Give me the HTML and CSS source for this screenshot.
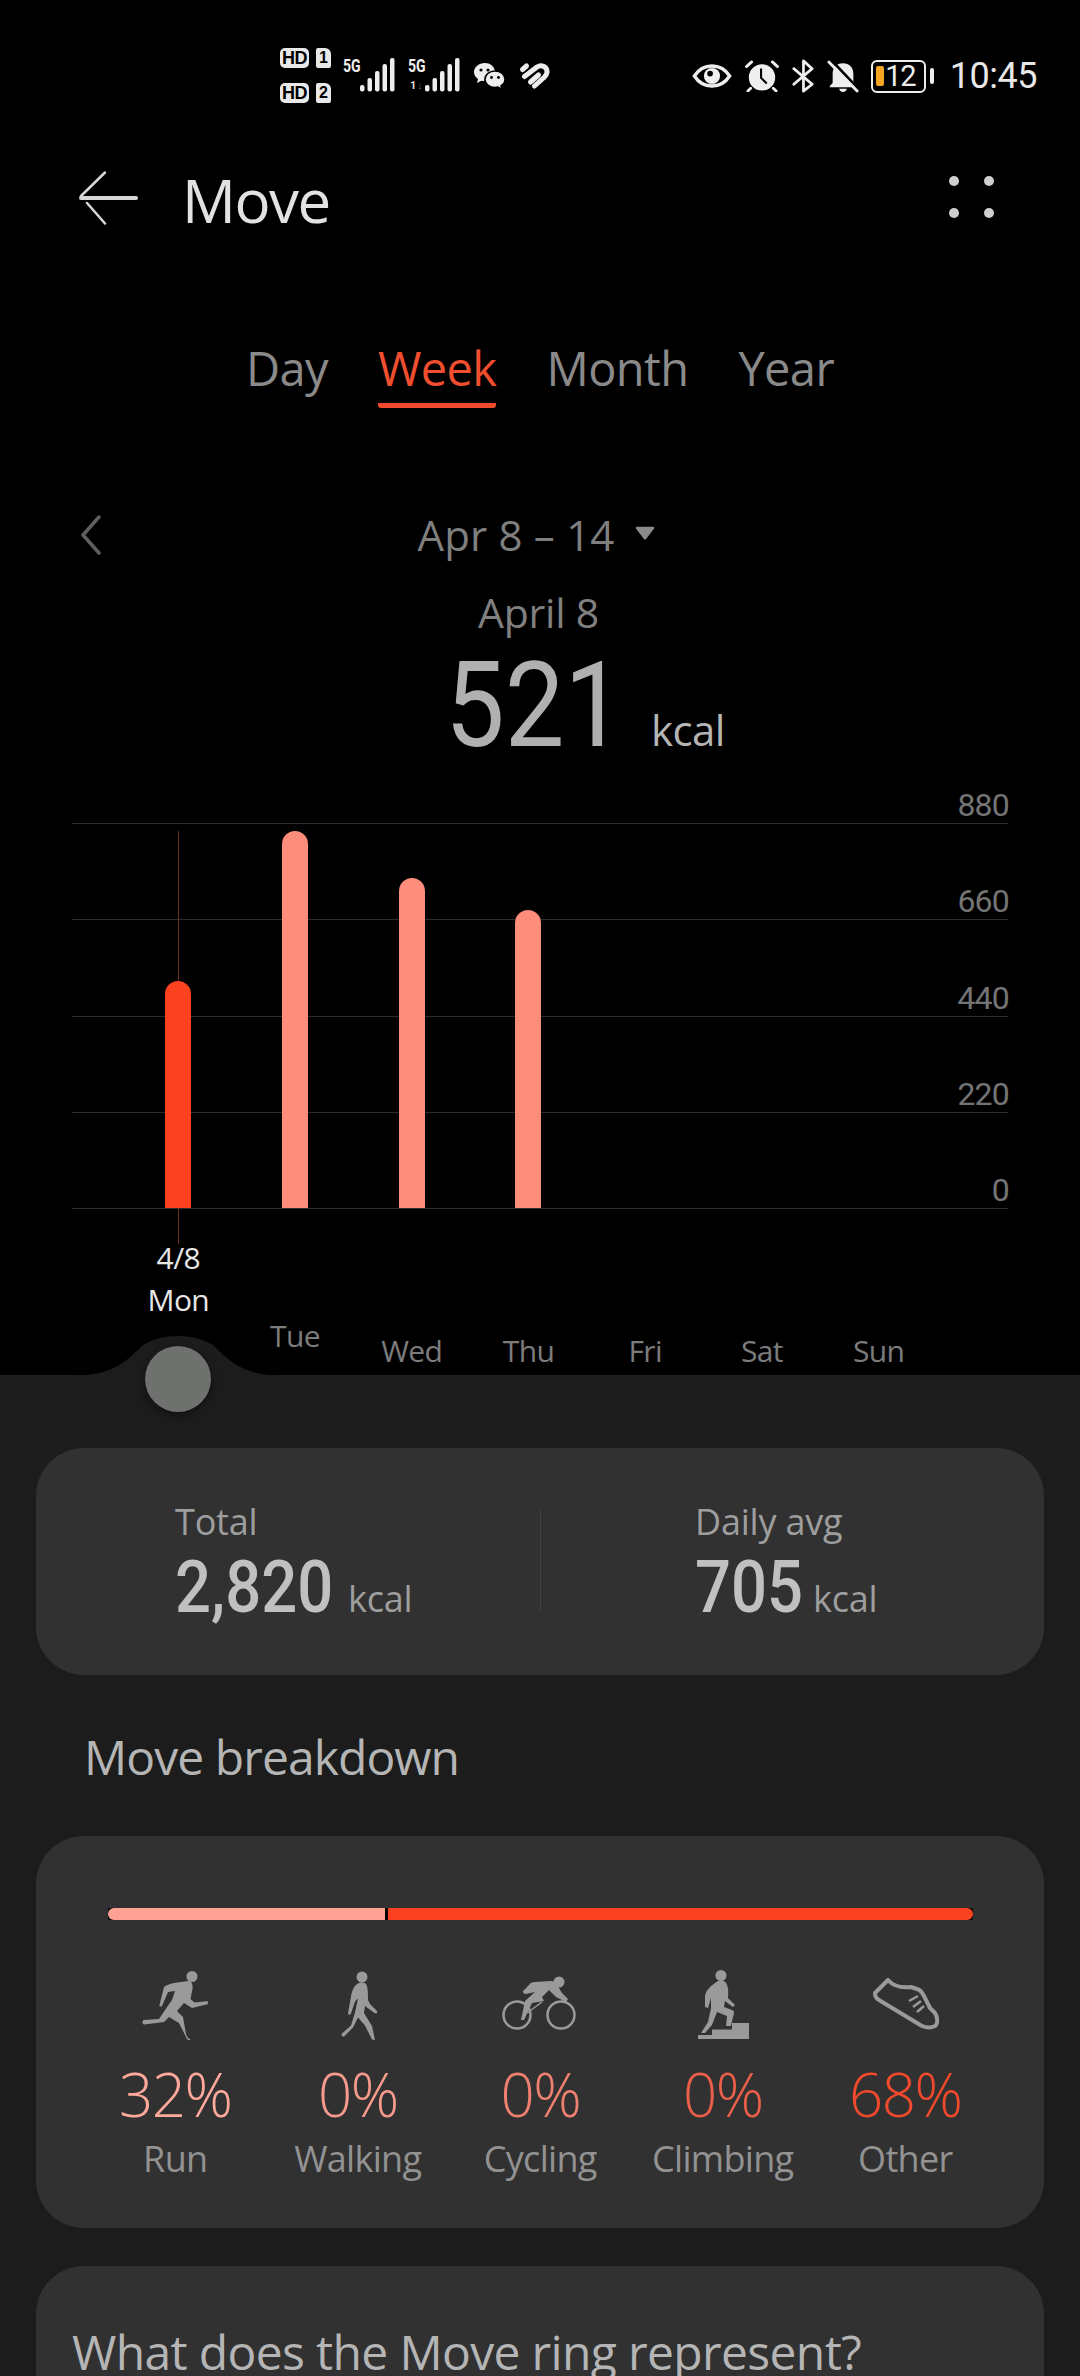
FILE: index.html
```html
<!DOCTYPE html>
<html lang="en">
<head>
<meta charset="utf-8">
<title>Move</title>
<link rel="stylesheet" href="styles.css">
</head>
<body>
<div class="page">
  <section class="top">
    <div class="status">
      <div class="status-left">
        <div class="hd-stack">
          <div class="hd-row"><span class="hd">HD</span><span class="sim">1</span></div>
          <div class="hd-row"><span class="hd">HD</span><span class="sim">2</span></div>
        </div>
        <div class="net"><span class="g5">5G</span>
          <svg class="bars" viewBox="0 0 36 34"><g fill="#eee"><rect x="0" y="27" width="4.500" height="6.500" rx="2"/><rect x="7.500" y="20" width="4.500" height="13.500" rx="2"/><rect x="15" y="13" width="4.500" height="20.500" rx="2"/><rect x="22.500" y="6" width="4.500" height="27.500" rx="2"/><rect x="30" y="0" width="4.500" height="33.500" rx="2"/></g></svg>
        </div>
        <div class="net"><span class="g5">5G</span><span class="sub">1<em>↓</em></span>
          <svg class="bars" viewBox="0 0 36 34"><g fill="#eee"><rect x="0" y="27" width="4.500" height="6.500" rx="2"/><rect x="7.500" y="20" width="4.500" height="13.500" rx="2"/><rect x="15" y="13" width="4.500" height="20.500" rx="2"/><rect x="22.500" y="6" width="4.500" height="27.500" rx="2"/><rect x="30" y="0" width="4.500" height="33.500" rx="2"/></g></svg>
        </div>
        <svg class="ic-wechat" viewBox="0 0 33 28"><path fill="#eee" d="M12 1C5.900 1 1 5 1 10c0 2.900 1.500 5.300 4 7l-1 4 4.500-2.300c1 .3 2 .4 3 .4 0-5.500 4.500-9.600 10.500-9.600C21.200 4 17 1 12 1z"/><path fill="#eee" stroke="#000" stroke-width="1.500" d="M22 9c-5.600 0-10 3.600-10 8.200s4.400 8.200 10 8.200c1.100 0 2.100-.2 3-.4l3.800 2.300-.8-3.600c2.500-1.500 4-3.800 4-6.500C32 12.600 27.600 9 22 9z"/><g fill="#000"><circle cx="8" cy="8" r="1.600"/><circle cx="15" cy="8" r="1.600"/><circle cx="18.500" cy="15.500" r="1.400"/><circle cx="25.500" cy="15.500" r="1.400"/></g></svg>
        <svg class="ic-health" viewBox="0 0 33 28"><g fill="none" stroke="#eee" stroke-width="5" stroke-linecap="round" stroke-linejoin="round"><path d="M4.500 7.500l4-3.500"/><path d="M6.500 14.500L19 5c4.500-3 10.500 0 10 5.500-.2 2-1.500 3.500-3 5L16.500 24"/><path d="M12.500 20l8-7"/></g></svg>
      </div>
      <div class="status-right">
        <svg class="ic-eye" viewBox="0 0 42 28"><path fill="none" stroke="#eee" stroke-width="3.500" d="M2.500 14C7 7 13 3.500 21 3.500S35 7 39.500 14C35 21 29 24.500 21 24.500S7 21 2.500 14z"/><circle cx="21" cy="14" r="8.500" fill="#eee"/><circle cx="19" cy="11.500" r="3" fill="#000"/></svg>
        <svg class="ic-alarm" viewBox="0 0 36 34"><circle cx="18" cy="18.500" r="14" fill="#eee"/><path d="M17 9v10l6 6" fill="none" stroke="#000" stroke-width="2.200"/><path d="M1.500 7L7 2M29 2l5.500 5M6 30l-3 3M30 30l3 3" stroke="#eee" stroke-width="3" stroke-linecap="round"/></svg>
        <svg class="ic-bt" viewBox="0 0 24 36"><path fill="none" stroke="#eee" stroke-width="3" stroke-linejoin="round" stroke-linecap="round" d="M2 10l20 17-9.500 7.500V1.500L22 10 2 27"/></svg>
        <svg class="ic-bell" viewBox="0 0 34 34"><path fill="#eee" d="M17 3C10 3 6 8 6 14v10l-3 3v1.500h28V27l-3-3V14C28 8 24 3 17 3zM13 30h8c0 2-2 3.500-4 3.500s-4-1.500-4-3.500z"/><path d="M4 -1l31 33" stroke="#000" stroke-width="3" /><path d="M2 1.500l30 31" stroke="#eee" stroke-width="3" stroke-linecap="round"/></svg>
        <div class="battery"><div class="batt-body"><span class="batt-fill"></span><span class="batt-num">12</span></div><span class="batt-cap"></span></div>
        <span class="clock">10:45</span>
      </div>
    </div>

    <header class="appbar">
      <svg class="back" viewBox="0 0 60 54"><path fill="none" stroke="#d8d8d8" stroke-width="2.500" stroke-linecap="round" d="M27 1.500L3 25M9 32l18 20.500"/><path d="M3 27h55" stroke="#d8d8d8" stroke-width="4" stroke-linecap="round"/></svg>
      <h1 class="title">Move</h1>
      <div class="more"><i></i><i></i><i></i><i></i></div>
    </header>

    <nav class="tabs">
      <span class="tab">Day</span>
      <span class="tab active">Week</span>
      <span class="tab">Month</span>
      <span class="tab">Year</span>
    </nav>

    <div class="range">
      <svg class="prev" viewBox="0 0 22 40"><path fill="none" stroke="#5f5f5f" stroke-width="3.500" stroke-linecap="round" stroke-linejoin="round" d="M19 2L3 20l16 18"/></svg>
      <div class="range-label">Apr 8 – 14<svg class="caret" viewBox="0 0 22 16"><path fill="#8a8a8a" d="M2 1h18c1 0 1.500 1 1 2l-9 12c-.5.500-1.500.500-2 0L1 3c-.500-1 0-2 1-2z"/></svg></div>
    </div>
    <div class="day-label">April 8</div>
    <div class="reading"><span class="reading-num">521</span><span class="reading-unit">kcal</span></div>

    <div class="chart">
      <div class="grid">
        <div class="grid-row"><span>880</span></div>
        <div class="grid-row"><span>660</span></div>
        <div class="grid-row"><span>440</span></div>
        <div class="grid-row"><span>220</span></div>
        <div class="grid-row"><span>0</span></div>
      </div>
      <div class="plot">
        <div class="slot"><span class="marker"></span><span class="bar now" style="height:227px"></span></div>
        <div class="slot"><span class="bar" style="height:377px"></span></div>
        <div class="slot"><span class="bar" style="height:330px"></span></div>
        <div class="slot"><span class="bar" style="height:298px"></span></div>
        <div class="slot"></div><div class="slot"></div><div class="slot"></div>
      </div>
      <div class="days">
        <div class="d sel"><span>4/8</span><span>Mon</span></div>
        <div class="d tue">Tue</div>
        <div class="d">Wed</div>
        <div class="d">Thu</div>
        <div class="d">Fri</div>
        <div class="d">Sat</div>
        <div class="d">Sun</div>
      </div>
    </div>
  </section>

  <section class="sheet">
    <svg class="bump" viewBox="0 0 216 41"><path fill="#1b1c1b" d="M0 41C45 41 58 24 73 10 84 4 94 1 108 1s24 3 35 9c15 14 28 31 73 31z"/></svg>
    <span class="knob"></span>

    <div class="card totals">
      <div class="stat">
        <div class="stat-label">Total</div>
        <div class="stat-value"><b class="w157">2,820</b><span>kcal</span></div>
      </div>
      <span class="divider"></span>
      <div class="stat">
        <div class="stat-label">Daily avg</div>
        <div class="stat-value"><b class="w102">705</b><span>kcal</span></div>
      </div>
    </div>

    <h2 class="section-title">Move breakdown</h2>

    <div class="card breakdown">
      <div class="stack"><span class="seg a"></span><span class="seg b"></span></div>
      <div class="types">
        <div class="type">
          <svg viewBox="0 0 66 70"><g fill="#9a9a9a"><circle cx="50" cy="6.500" r="5.500"/><path d="M32 13l14-2c4 0 5 4 4.500 8l-2 10 4 3.500 12.500-1.300c1.500 0 1.500 2.500.3 3L50 38l-8-5-7 8 6 6 3 17c.5 3 3 5 5 6-2 1-3.500 0-4.500-2L37 53 27 47l-5 5-20 2.500C0 54 0 50.500 2 50l15-1 6-9 7-10 3-9-7 1-6 14c-1 1-3 .5-2.500-1L22 17c2-2 6-3 10-4z"/></g></svg>
          <div class="pct p1">32%</div><div class="name">Run</div>
        </div>
        <div class="type">
          <svg viewBox="0 0 66 70"><g fill="#9a9a9a" transform="translate(2)"><circle cx="35" cy="7" r="5.500"/><path d="M30 14c3-2 7-2 9 0 2 3 2 10 2 16l2 4 7 7c1 2-1 3-2.500 2L38 36l-1 7 8 13 3 14-3-.5-7-14-7-8-5 10-9 9c-2 0-3-1-2-3l9-8 4-13 3-14-3 3-4 12c-1 2-3 1-3 0l3-17c1-6 3-11 7-13z"/></g></svg>
          <div class="pct p2">0%</div><div class="name">Walking</div>
        </div>
        <div class="type">
          <svg viewBox="0 0 76 62" class="wide"><g fill="none" stroke="#9a9a9a"><circle cx="15" cy="40" r="13.500" stroke-width="2.500"/><circle cx="59" cy="40" r="13.500" stroke-width="2.500"/><path d="M25 38L40 27" stroke-width="1.500"/></g><g fill="#9a9a9a"><circle cx="57" cy="7" r="5.500"/><path d="M27 10c1-2 3-3 6-3l16-1c3 0 5 2 6 4l5 8 6 6-2 3-10-5-7-7-7 7 2 4-12 2-8 17h-3l4-19 10-9-9 2c-2 0-3-1-3-3z"/></g></svg>
          <div class="pct p3">0%</div><div class="name">Cycling</div>
        </div>
        <div class="type">
          <svg viewBox="0 0 66 70"><g fill="#9a9a9a"><circle cx="31" cy="5.500" r="5.500"/><path d="M25 13c4-4 11-3 12 2 2 5 1 10 1 13l7 7-2 2-8-6-1 6 8 3c3 1 2 4 1 7l-2 9h-5l1-10-10-4-5 13-7 8h-4l7-11 3-14v-10l-3 10-3-1V26c1-6 6-10 10-13z"/><path d="M8 69v-4h14v-5.500h20V53h17v16z"/></g></svg>
          <div class="pct p4">0%</div><div class="name">Climbing</div>
        </div>
        <div class="type">
          <svg viewBox="0 0 67 52" class="shoe"><path fill="none" stroke="#9a9a9a" stroke-width="4" stroke-linejoin="round" stroke-linecap="round" d="M3 15L16 2c6 7 14 8 23 7l6 2c3 1 5 3 7 7l6 12 5 5c3 5 3 11 0 13-4 2-8 2-13 0L7 22c-2-1-4-4-4-7z"/><path fill="none" stroke="#9a9a9a" stroke-width="2.500" d="M37 23l9-5M41 29l8-6M45 34l7-6"/></svg>
          <div class="pct p5">68%</div><div class="name">Other</div>
        </div>
      </div>
    </div>

    <div class="card faq">What does the Move ring represent?</div>
  </section>
</div>
</body>
</html>
```
FILE: styles.css
```css
* { box-sizing: border-box; margin: 0; padding: 0; }
html, body { width: 1080px; height: 2376px; overflow: hidden; background: #000; }
body { font-family: "Open Sans", "Noto Sans", sans-serif; color: #ddd; }
.page { width: 1080px; height: 2376px; display: flex; flex-direction: column; overflow: hidden; }
.top { height: 1375px; flex: none; background: #000; position: relative; }

/* status bar */
.status { height: 110px; padding: 48px 43px 0 280px; display: flex; justify-content: space-between; align-items: flex-start; }
.status-left { display: flex; align-items: flex-start; }
.status-right { display: flex; align-items: center; height: 44px; margin-top: 6px; }
.hd-stack { display: flex; flex-direction: column; gap: 15px; width: 51px; }
.hd-row { display: flex; gap: 7px; height: 20px; align-items: center; }
.hd { width: 29px; height: 20px; border-radius: 5px; background: #e8e8e8; color: #000; font: 700 18px/20px "Liberation Sans", sans-serif; text-align: center; letter-spacing: -.5px; }
.sim { width: 15px; height: 20px; border-radius: 2px 6px 2px 2px; background: #e8e8e8; color: #000; font: 700 16px/20px "Liberation Sans", sans-serif; text-align: center; }
.net { display: flex; margin-left: 12px; width: 53px; height: 34px; position: relative; margin-top: 10px; justify-content: flex-end; }
.g5 { position: absolute; left: 0; top: -2px; font: 700 19px/19px "Roboto", sans-serif; color: #eee; transform: scaleX(.74); transform-origin: left; }
.sub { position: absolute; left: 2px; top: 22px; font: 700 11px/12px "Roboto", sans-serif; color: #ddd; }
.sub em { font-style: normal; color: #666; margin-left: 1px; }
.bars { width: 36px; height: 34px; }
.ic-wechat { width: 33px; height: 28px; margin: 14px 0 0 12px; }
.ic-health { width: 33px; height: 28px; margin: 14px 0 0 12px; }
.ic-eye { width: 40px; height: 28px; }
.ic-alarm { width: 34px; height: 32px; margin-left: 13px; }
.ic-bt { width: 22px; height: 36px; margin-left: 13px; }
.ic-bell { width: 32px; height: 33px; margin-left: 13px; }
.battery { display: flex; align-items: center; margin-left: 12px; gap: 4px; }
.batt-body { width: 55px; height: 33px; border: 2.5px solid #eee; border-radius: 6px; display: flex; align-items: center; padding-left: 3.500px; }
.batt-fill { width: 8px; height: 20px; background: #f5a623; border-radius: 2px; flex: none; }
.batt-num { font: 400 29px/28px "Roboto", sans-serif; letter-spacing: -1.500px; color: #eee; margin-left: 1px; }
.batt-cap { width: 4px; height: 16px; background: #eee; border-radius: 2px; }
.clock { font: 400 36px/44px "Roboto", sans-serif; color: #e8e8e8; margin-left: 16px; letter-spacing: -.5px; }

/* app bar */
.appbar { height: 78px; display: flex; align-items: center; padding: 0 0 0 78px; margin-top: 51px; position: relative; }
.back { width: 60px; height: 54px; flex: none; margin-top: -4px; }
.title { font: 400 60px/78px "Open Sans", sans-serif; color: #e2e2e2; margin-left: 44px; letter-spacing: -1.500px; }
.more { margin-left: auto; margin-right: 86px; width: 45px; height: 42px; display: grid; grid-template-columns: 10px 10px; grid-template-rows: 10px 10px; justify-content: space-between; align-content: space-between; margin-top: -6px; }
.more i { background: #cfcfcf; border-radius: 50%; }

/* tabs */
.tabs { display: flex; justify-content: center; gap: 50px; margin-top: 95px; height: 74px; }
.tab { font: 400 47px/68px "Open Sans", sans-serif; color: #8a8a8a; height: 74px; letter-spacing: -.6px; }
.tab.active { color: #f04e2f; border-bottom: 5px solid #ef4a2c; border-radius: 0 0 3px 3px; }

/* date */
.range { height: 60px; margin-top: 97px; position: relative; display: flex; justify-content: center; align-items: center; }
.prev { position: absolute; left: 80px; top: 10px; width: 22px; height: 40px; }
.range-label { font: 400 42px/60px "Open Sans", sans-serif; color: #7f7f7f; display: flex; align-items: center; gap: 20px; padding-right: 8px; letter-spacing: .2px; }
.caret { width: 20px; height: 16px; margin-top: -4px; }
.day-label { text-align: center; font: 400 41px/54px "Open Sans", sans-serif; color: #808080; margin-top: 20px; letter-spacing: -.2px; padding-right: 3px; }
.reading { display: flex; justify-content: flex-start; align-items: baseline; height: 100px; padding-left: 445px; margin-top: 17px; }
.reading-num { font: 400 118px/100px "Roboto", sans-serif; color: #b0b0b0; width: 206px; display: inline-block; transform: scaleX(.9); transform-origin: left; }
.reading-unit { font: 400 42px/100px "Open Sans", sans-serif; color: #b5b5b5; letter-spacing: -.6px; }

/* chart */
.chart { position: absolute; left: 72px; top: 788px; width: 936px; height: 587px; }
.grid { position: absolute; left: 0; right: 0; top: 0; height: 421px; display: flex; flex-direction: column; justify-content: space-between; }
.grid-row { height: 36px; border-bottom: 1px solid #2c2c2c; display: flex; justify-content: flex-end; align-items: flex-end; }
.grid-row span { font: 400 32px/34px "Roboto", sans-serif; color: #747474; margin-bottom: 1px; letter-spacing: -.8px; margin-right: -1px; }
.plot { position: absolute; left: 48px; top: 35px; height: 385px; width: 817px; display: grid; grid-template-columns: repeat(7, 1fr); align-items: end; }
.slot { height: 385px; display: flex; align-items: flex-end; justify-content: center; position: relative; }
.bar { width: 26px; background: #ff8d7b; border-radius: 13px 13px 0 0; position: relative; }
.bar.now { background: #fb4220; }
.marker { position: absolute; left: 50%; top: 8px; height: 413px; width: 1px; background: #6b2f22; }
.days { position: absolute; left: 48px; top: 0; width: 817px; height: 587px; display: grid; grid-template-columns: repeat(7, 1fr); }
.d { font: 400 30px/38px "Open Sans", sans-serif; color: #7c7c7c; text-align: center; margin-top: 544px; letter-spacing: -.6px; }
.d.tue { margin-top: 529px; }
.d.sel { margin-top: 451px; color: #e6e6e6; display: flex; flex-direction: column; height: 84px; gap: 4px; }

/* sheet */
.sheet { flex: 1; background: #1b1c1b; position: relative; padding: 73px 36px 0 36px; }
.bump { position: absolute; left: 70px; top: -40px; width: 216px; height: 41px; }
.knob { position: absolute; left: 145px; top: -29px; width: 66px; height: 66px; border-radius: 50%; background: #6f716f; box-shadow: 0 3px 8px rgba(0,0,0,.45); }
.card { background: #313131; border-radius: 48px; }

.totals { height: 227px; display: grid; grid-template-columns: 1fr 1fr; position: relative; }
.stat { padding-top: 50px; padding-left: 139px; }
.stat + .divider + .stat { padding-left: 155px; }
.divider { position: absolute; left: 504px; top: 62px; height: 102px; width: 1px; background: #414141; }
.stat-label { font: 400 36px/48px "Open Sans", sans-serif; color: #9e9e9e; letter-spacing: -.2px; }
.stat-value { display: flex; align-items: baseline; height: 74px; margin-top: 5px; }
.stat-value b { font: 500 72px/74px "Roboto", sans-serif; color: #c0c0c0; display: inline-block; transform: scaleX(.88); transform-origin: left; white-space: nowrap; }
.w157 { width: 173px; }
.w102 { width: 118px; }
.stat-value span { font: 400 36px/74px "Open Sans", sans-serif; color: #9e9e9e; letter-spacing: -.2px; }

.section-title { font: 400 48px/64px "Open Sans", sans-serif; color: #b5b5b5; margin: 50px 0 0 48px; letter-spacing: -.93px; }

.breakdown { margin-top: 47px; height: 392px; padding: 72px 0 0; }
.stack { margin: 0 71px 0 72px; height: 12px; display: flex; background: #000; border-radius: 2px; }
.seg { display: block; height: 12px; }
.seg.a { width: 277px; background: #ffa295; border-radius: 6px 0 0 6px; }
.seg.b { flex: 1; margin-left: 3px; background: #fb4220; border-radius: 0 6px 6px 0; }
.types { display: grid; grid-template-columns: repeat(5, 182.500px); margin: 50px 0 0 48px; }
.type { display: flex; flex-direction: column; align-items: center; }
.type svg { width: 66px; height: 70px; margin-bottom: 21px; }
.type svg.wide { width: 76px; height: 62px; margin-top: 5px; margin-bottom: 24px; }
.type svg.shoe { width: 67px; height: 52px; margin-top: 8px; margin-bottom: 31px; }
.pct { font: 300 60px/66px "Open Sans", sans-serif; letter-spacing: -1.500px; }
.p1 { color: #ffa99c; }
.p2 { color: #f59a8c; }
.p3 { color: #ef8070; }
.p4 { color: #ea5f49; }
.p5 { color: #f0492c; }
.name { font: 400 36px/56px "Open Sans", sans-serif; color: #929292; letter-spacing: -.7px; margin-top: 4px; }

.faq { margin-top: 38px; height: 180px; padding: 54px 36px 0; font: 400 48px/64px "Open Sans", sans-serif; color: #b5b5b5; letter-spacing: -.65px; white-space: nowrap; }
```
